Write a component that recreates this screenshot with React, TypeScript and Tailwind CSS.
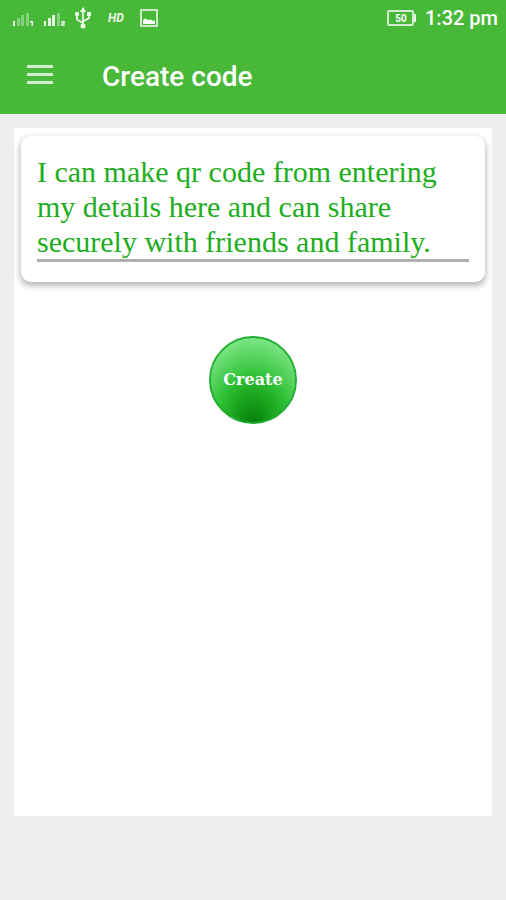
import React, { useState } from "react";

function SignalIcon({ slot, strong }: { slot: string; strong: boolean }) {
  return (
    <svg width="23" height="18" viewBox="0 0 23 18" fill="#fff" aria-hidden="true">
      <rect x="1" y="12" width="2" height="5" opacity="0.9" />
      <rect x="5" y="9" width="3" height="8" opacity={strong ? 0.85 : 0.35} />
      <rect x="9" y="6" width="3" height="11" opacity={strong ? 0.85 : 0.35} />
      <rect x="14" y="4" width="3" height="13" opacity="0.35" />
      {slot === "1" ? (
        <path d="M18 12h3v5h-1.500v-3.500H18z" opacity="0.85" />
      ) : (
        <path d="M18 12h4v2.500l-2 1.200h2V17h-4v-2l2-1.200h-2z" opacity="0.75" />
      )}
    </svg>
  );
}

function UsbIcon() {
  return (
    <svg width="18" height="22" viewBox="0 0 18 22" fill="none" stroke="#fff" strokeWidth="1.800" opacity="0.9" aria-hidden="true">
      <path d="M9 4v14M9 16L3 12.500V7M9 14.500l6-3.500V7" />
      <path d="M9 0l3.200 5H5.800z" fill="#fff" stroke="none" />
      <circle cx="3" cy="7" r="2.200" fill="#fff" stroke="none" />
      <rect x="13" y="5" width="4" height="4" fill="#fff" stroke="none" />
      <circle cx="9" cy="19" r="2.500" fill="#fff" stroke="none" />
    </svg>
  );
}

function PictureIcon() {
  return (
    <svg width="18" height="18" viewBox="0 0 18 18" aria-hidden="true">
      <rect x="1" y="1" width="16" height="16" fill="none" stroke="#fff" strokeWidth="1.800" opacity="0.8" />
      <path d="M3 15v-4l2-1.500 3 1.500 2.500-.5L13 12l2-.5V15z" fill="#fff" />
    </svg>
  );
}

function Battery() {
  return (
    <svg width="31" height="18" viewBox="0 0 31 18" role="img" aria-label="Battery 50 percent">
      <rect x="2" y="2" width="25" height="14" rx="1" fill="none" stroke="#fff" strokeWidth="2" opacity="0.75" />
      <path d="M28 5h2v8h-2z" fill="#fff" opacity="0.85" />
      <text x="15" y="13" fill="#fff" fontSize="10" fontWeight="700" textAnchor="middle" className="font-['Roboto',sans-serif]">
        50
      </text>
    </svg>
  );
}

export default function App() {
  const [details, setDetails] = useState(
    "I can make qr code from entering my details here and can share securely with friends and family."
  );

  return (
    <div className="flex min-h-screen flex-col bg-[#eeeeee] font-['Roboto',sans-serif]">
      <header className="bg-[#48b838] text-white">
        <div className="flex h-9 items-center justify-between pr-2 pl-3">
          <div className="flex items-center">
            <SignalIcon slot="1" strong={false} />
            <span className="w-2" />
            <SignalIcon slot="2" strong />
            <span className="w-2" />
            <UsbIcon />
            <span className="ml-4 text-xs font-bold italic opacity-90">HD</span>
            <span className="w-4" />
            <PictureIcon />
          </div>
          <div className="flex items-center gap-2">
            <Battery />
            <span className="text-xl font-medium">1:32 pm</span>
          </div>
        </div>
        <div className="flex h-[78px] items-center px-6">
          <button type="button" aria-label="Open menu" className="flex h-8 w-8 items-center justify-center">
            <svg width="26" height="20" viewBox="0 0 26 20" fill="#fff" opacity="0.75" aria-hidden="true">
              <path d="M0 0h26v3H0zM0 8h26v3H0zM0 16h26v3H0z" />
            </svg>
          </button>
          <h1 className="ml-[46px] pt-1 text-[28px] leading-9 font-medium">Create code</h1>
        </div>
      </header>

      <main className="mx-[14px] mt-[14px] mb-[84px] flex flex-1 flex-col items-center bg-white px-[7px] pt-2">
        <section className="w-full rounded-[10px] bg-white px-4 pt-[18px] pb-5 shadow-[0_3px_6px_1px_rgba(0,0,0,0.28)]">
          <textarea
            aria-label="Details"
            rows={3}
            spellCheck={false}
            value={details}
            onChange={(e) => setDetails(e.target.value)}
            className="block w-full resize-none overflow-hidden border-b-3 border-[#b0b0b0] bg-transparent font-['Liberation_Serif',serif] text-[30px] leading-[35px] text-[#20ad20] outline-none"
          />
        </section>
        <button
          type="button"
          className="mt-[54px] h-[88px] w-[88px] rounded-full border-2 border-[#25ad35] bg-[radial-gradient(ellipse_75%_100%_at_50%_100%,#087c0a_0%,#18a01c_28%,#2fc136_55%,#5cd664_80%,#80e888_100%)] bg-origin-border font-['DejaVu_Serif',serif] text-base font-bold text-white"
        >
          Create
        </button>
      </main>
    </div>
  );
}
